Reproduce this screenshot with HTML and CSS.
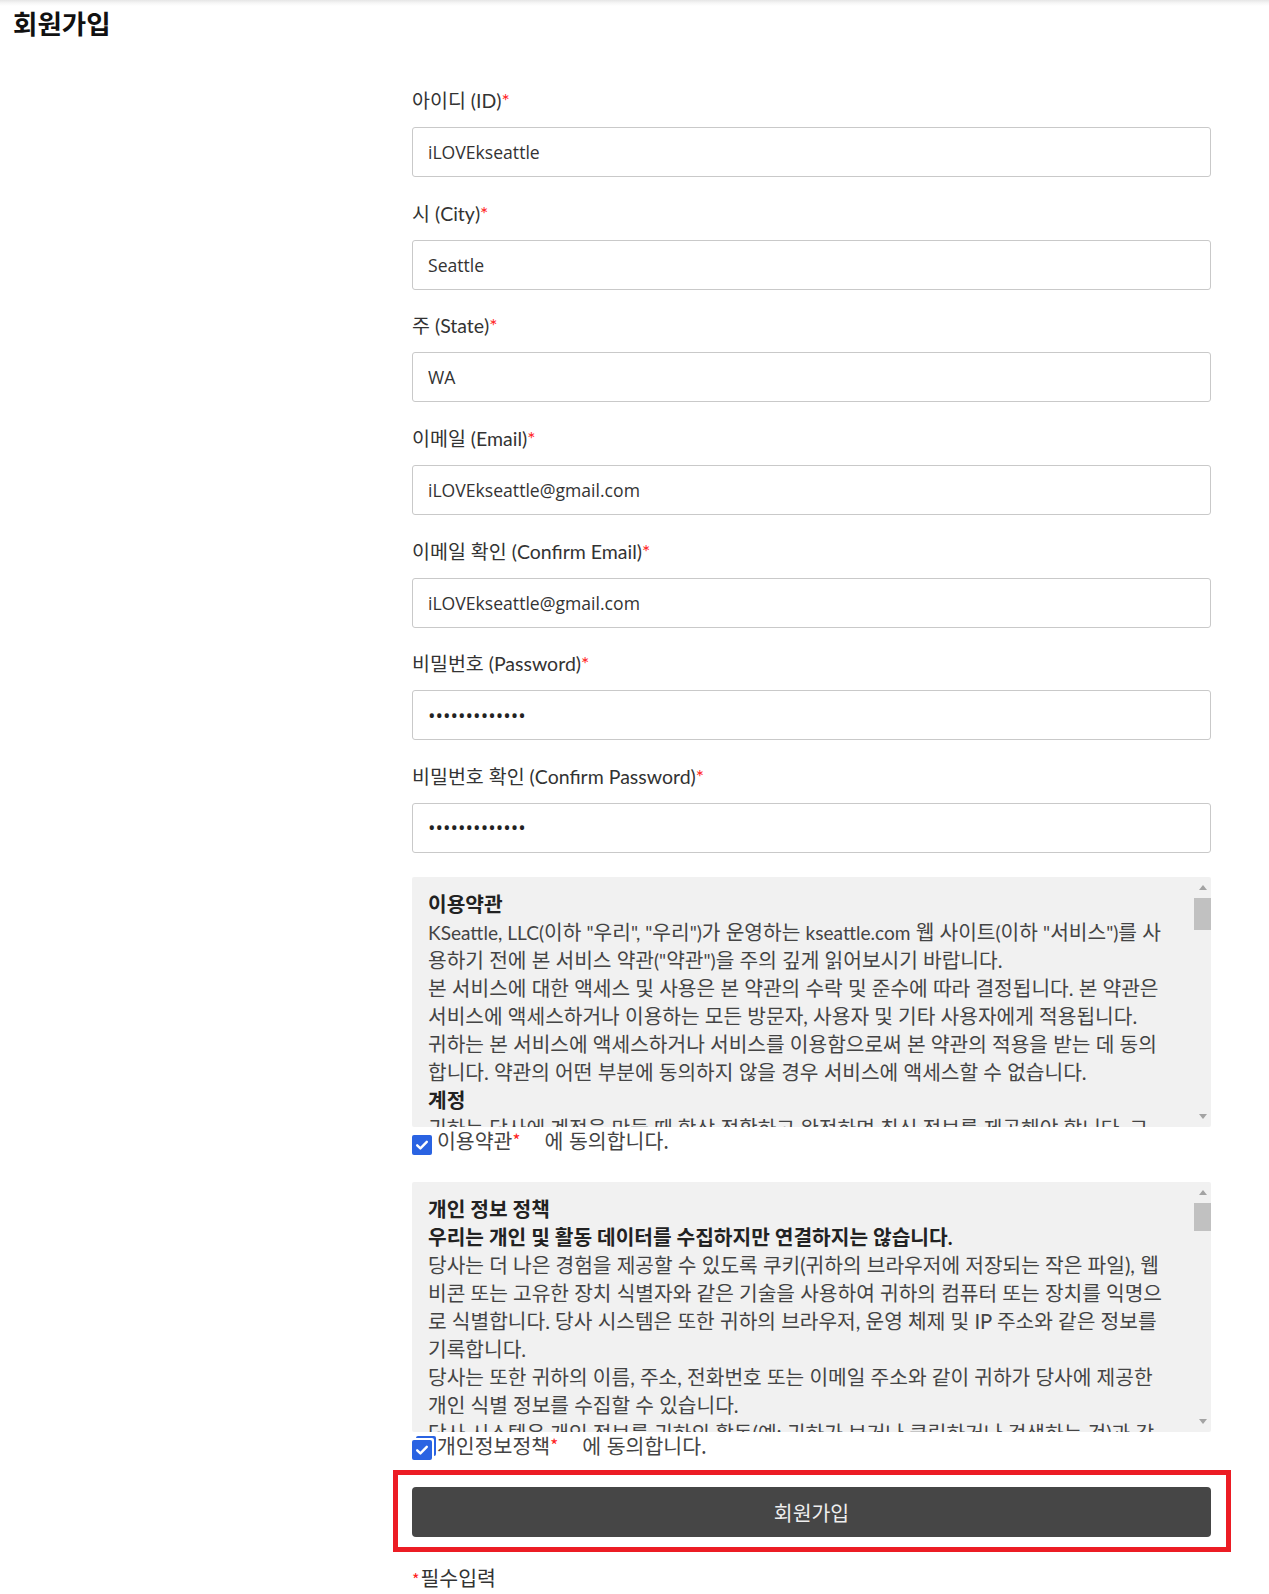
FILE: index.html
```html
<!DOCTYPE html>
<html lang="ko">
<head>
<meta charset="utf-8">
<title>회원가입</title>
<link rel="stylesheet" href="styles.css">
</head>
<body>
<header class="page-head">
  <h1 class="page-title">회원가입</h1>
</header>
<main class="signup">
  <form class="signup-form">
    <div class="field">
      <label class="field-label">아이디 (ID)<span class="req">*</span></label>
      <input class="field-input" type="text" value="iLOVEkseattle">
    </div>
    <div class="field">
      <label class="field-label">시 (City)<span class="req">*</span></label>
      <input class="field-input" type="text" value="Seattle">
    </div>
    <div class="field">
      <label class="field-label">주 (State)<span class="req">*</span></label>
      <input class="field-input" type="text" value="WA">
    </div>
    <div class="field">
      <label class="field-label">이메일 (Email)<span class="req">*</span></label>
      <input class="field-input" type="text" value="iLOVEkseattle@gmail.com">
    </div>
    <div class="field">
      <label class="field-label">이메일 확인 (Confirm Email)<span class="req">*</span></label>
      <input class="field-input" type="text" value="iLOVEkseattle@gmail.com">
    </div>
    <div class="field">
      <label class="field-label">비밀번호 (Password)<span class="req">*</span></label>
      <input class="field-input field-pass" type="password" value="kseattle12345">
    </div>
    <div class="field field-last">
      <label class="field-label">비밀번호 확인 (Confirm Password)<span class="req">*</span></label>
      <input class="field-input field-pass" type="password" value="kseattle12345">
    </div>

    <div class="policy-box">
      <div class="policy-body">
        <h4 class="policy-head">이용약관</h4>
        <p><span class="lat">KSeattle, LLC(</span>이하 <span class="lat">"</span>우리<span class="lat">", "</span>우리<span class="lat">")</span>가 운영하는 <span class="lat">kseattle.com</span> 웹 사이트<span class="lat">(</span>이하 <span class="lat">"</span>서비스<span class="lat">")</span>를 사용하기 전에 본 서비스 약관<span class="lat">("</span>약관<span class="lat">")</span>을 주의 깊게 읽어보시기 바랍니다.</p>
        <p>본 서비스에 대한 액세스 및 사용은 본 약관의 수락 및 준수에 따라 결정됩니다. 본 약관은 서비스에 액세스하거나 이용하는 모든 방문자, 사용자 및 기타 사용자에게 적용됩니다.</p>
        <p>귀하는 본 서비스에 액세스하거나 서비스를 이용함으로써 본 약관의 적용을 받는 데 동의합니다. 약관의 어떤 부분에 동의하지 않을 경우 서비스에 액세스할 수 없습니다.</p>
        <h4 class="policy-head">계정</h4>
        <p>귀하는 당사에 계정을 만들 때 항상 정확하고 완전하며 최신 정보를 제공해야 합니다. 그렇게 하지 않으면 약관 위반에 해당하며, 당사 서비스의 계정이 즉시 해지될 수 있습니다.</p>
        <p>귀하는 서비스에 액세스하는 데 사용하는 비밀번호와 비밀번호에 따른 모든 활동 또는 작업에 대해 책임을 집니다.</p>
      </div>
      <div class="scrollbar" aria-hidden="true">
        <span class="sb-btn sb-up"></span>
        <span class="sb-track"><span class="sb-thumb sb-thumb-terms"></span></span>
        <span class="sb-btn sb-down"></span>
      </div>
    </div>
    <label class="agree">
      <span class="check"><svg viewBox="0 0 20 20" width="20" height="20" aria-hidden="true"><path d="M5.2 10.3l3.2 3.1 6.4-6.6" fill="none" stroke="#fff" stroke-width="2.4" stroke-linecap="round" stroke-linejoin="round"/></svg></span>
      <span class="agree-name">이용약관</span><span class="req">*</span>
      <span class="agree-tail">에 동의합니다.</span>
    </label>

    <div class="policy-box policy-privacy">
      <div class="policy-body">
        <h4 class="policy-head">개인 정보 정책</h4>
        <h4 class="policy-head">우리는 개인 및 활동 데이터를 수집하지만 연결하지는 않습니다.</h4>
        <p>당사는 더 나은 경험을 제공할 수 있도록 쿠키(귀하의 브라우저에 저장되는 작은 파일), 웹 비콘 또는 고유한 장치 식별자와 같은 기술을 사용하여 귀하의 컴퓨터 또는 장치를 익명으로 식별합니다. 당사 시스템은 또한 귀하의 브라우저, 운영 체제 및 IP 주소와 같은 정보를 기록합니다.</p>
        <p>당사는 또한 귀하의 이름, 주소, 전화번호 또는 이메일 주소와 같이 귀하가 당사에 제공한 개인 식별 정보를 수집할 수 있습니다.</p>
        <p>당사 시스템은 개인 정보를 귀하의 활동(예: 귀하가 보거나 클릭하거나 검색하는 것)과 각각 연결하지 않습니다.</p>
      </div>
      <div class="scrollbar" aria-hidden="true">
        <span class="sb-btn sb-up"></span>
        <span class="sb-track"><span class="sb-thumb sb-thumb-privacy"></span></span>
        <span class="sb-btn sb-down"></span>
      </div>
    </div>
    <label class="agree">
      <span class="check is-focused"><svg viewBox="0 0 20 20" width="20" height="20" aria-hidden="true"><path d="M5.2 10.3l3.2 3.1 6.4-6.6" fill="none" stroke="#fff" stroke-width="2.4" stroke-linecap="round" stroke-linejoin="round"/></svg></span>
      <span class="agree-name">개인정보정책</span><span class="req">*</span>
      <span class="agree-tail">에 동의합니다.</span>
    </label>

    <div class="submit-highlight">
      <button class="submit-btn" type="button">회원가입</button>
    </div>
    <p class="required-note"><span class="req">*</span>필수입력</p>
  </form>
</main>
</body>
</html>
```

FILE: styles.css
```css
html, body {
  margin: 0;
  padding: 0;
}

body {
  font-family: "Noto Sans CJK KR", "Open Sans", sans-serif;
  font-size: 18px;
  color: #333;
  background: #fff linear-gradient(to bottom, #e6e6e6 0, #f6f6f6 3px, #fff 6px) no-repeat top left / 100% 6px;
}

.page-head {
  padding: 7px 13px 0;
  height: 38px;
  box-sizing: border-box;
}

.page-title {
  margin: 0;
  font-size: 26.5px;
  line-height: 32px;
  font-weight: 700;
  color: #111;
}

.signup {
  padding: 50px 58px 20px 412px;
}

.signup-form {
  display: flex;
  flex-direction: column;
}

.field {
  display: flex;
  flex-direction: column;
  margin-bottom: 23.67px;
}

.field-last {
  margin-bottom: 24px;
}

.field-label {
  display: block;
  height: 26px;
  font-family: "Lato", "Noto Sans CJK KR", sans-serif;
  font-size: 19.5px;
  line-height: 26px;
  margin-bottom: 13px;
  color: #333;
  white-space: nowrap;
}

.req {
  color: #ff2222;
}

.field-input {
  box-sizing: border-box;
  height: 50px;
  width: 100%;
  margin: 0;
  padding: 0 15px;
  border: 1px solid #c9c9c9;
  border-radius: 3px;
  background: #fff;
  font-family: "Open Sans", "Noto Sans CJK KR", sans-serif;
  font-size: 17.6px;
  color: #333;
  outline: none;
}

.field-pass {
  font-size: 20px;
  color: #222;
}

.policy-box {
  display: flex;
  box-sizing: border-box;
  height: 250px;
  background: #f1f1f1;
  border-radius: 2px;
}

.policy-body {
  flex: 1;
  min-width: 0;
  overflow: hidden;
  padding: 13px 30px 0 16px;
  font-family: "Lato", "Noto Sans CJK KR", sans-serif;
  font-size: 20.3px;
  line-height: 28px;
  color: #444;
}

.policy-body p {
  margin: 0;
}

.policy-body .lat {
  font-size: 0.94em;
  line-height: 1;
}

.policy-head {
  margin: 0;
  font-size: 20.3px;
  line-height: 28px;
  font-weight: 700;
  color: #222;
}

.scrollbar {
  flex: none;
  width: 17px;
  display: flex;
  flex-direction: column;
}

.sb-btn {
  flex: none;
  height: 21px;
  display: flex;
  align-items: center;
  justify-content: center;
}

.sb-btn::before {
  content: "";
  width: 0;
  height: 0;
  border-left: 4.5px solid transparent;
  border-right: 4.5px solid transparent;
}

.sb-up::before {
  border-bottom: 5px solid #a3a3a3;
}

.sb-down::before {
  border-top: 5px solid #a3a3a3;
}

.sb-track {
  flex: 1;
  display: flex;
  flex-direction: column;
}

.sb-thumb {
  background: #c1c1c1;
}

.sb-thumb-terms {
  height: 32px;
}

.sb-thumb-privacy {
  height: 28px;
}

.policy-privacy {
  margin-top: 28px;
}

.agree {
  display: flex;
  align-items: flex-start;
  margin-top: -1px;
  height: 28px;
  line-height: 28px;
  font-size: 20.5px;
  color: #444;
}

.check {
  flex: none;
  width: 20px;
  height: 20px;
  margin-top: 9px;
  border-radius: 2px;
  background: #2a63e2;
  display: flex;
  margin-right: 5px;
}

.check.is-focused {
  box-shadow: 2px -2px 0 0 #fff, 4px -4px 0 0 #2a63e2;
}

.agree .req {
  font-size: 17px;
}

.agree-tail {
  margin-left: 24px;
}

.submit-highlight {
  margin: 11px -20px 0 -19px;
  border: 5px solid #ec1c24;
  padding: 12px 15px 10px 14px;
}

.submit-btn {
  display: block;
  width: 100%;
  height: 50px;
  border: none;
  border-radius: 4px;
  background: #464646;
  color: #eee;
  font-family: "Noto Sans CJK KR", "Open Sans", sans-serif;
  font-size: 20.5px;
  cursor: pointer;
}

.required-note {
  margin: 12px 0 0;
  line-height: 26px;
  font-size: 20.5px;
  color: #333;
}

.required-note .req {
  font-size: 16px;
  margin-right: 1px;
}
```
